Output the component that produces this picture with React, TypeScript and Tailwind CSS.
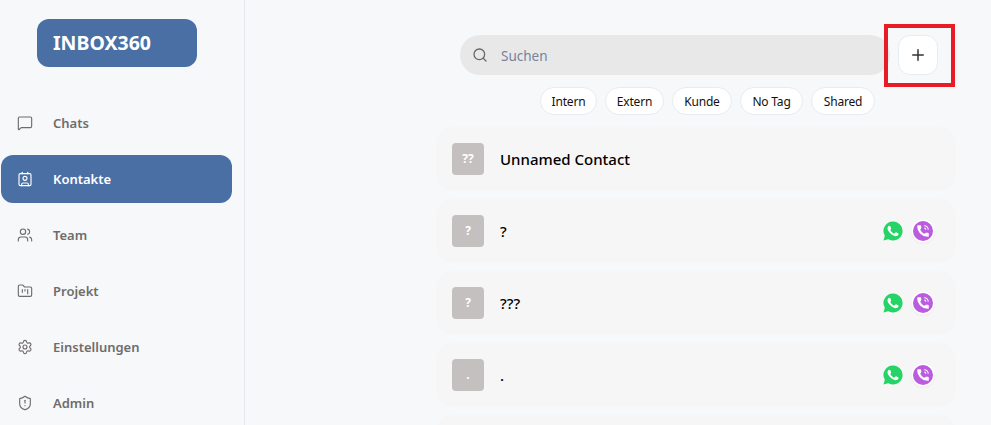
import { Contact, FolderKanban, MessageSquare, Plus, Search, Settings, ShieldAlert, Users } from "lucide-react";

const navItems = [
  { label: "Chats", icon: MessageSquare },
  { label: "Kontakte", icon: Contact, active: true },
  { label: "Team", icon: Users },
  { label: "Projekt", icon: FolderKanban },
  { label: "Einstellungen", icon: Settings },
  { label: "Admin", icon: ShieldAlert },
];

const tags = [
  { label: "Intern", width: "w-[57px]" },
  { label: "Extern", width: "w-[59px]" },
  { label: "Kunde", width: "w-[60px]" },
  { label: "No Tag", width: "w-[63px]" },
  { label: "Shared", width: "w-[64px]" },
];

const contacts = [
  { initials: "??", name: "Unnamed Contact", messengers: false },
  { initials: "?", name: "?", messengers: true },
  { initials: "?", name: "???", messengers: true },
  { initials: ".", name: ".", messengers: true },
  { initials: "", name: "", messengers: false },
];

function Messengers() {
  return (
    <div className="flex items-center gap-[9px]">
      <svg viewBox="0 0 24 24" className="h-[22px] w-[22px]">
        <path d="M12 1.6a10.4 10.4 0 0 0-8.9 15.7L1.6 22.4l5.2-1.4A10.4 10.4 0 1 0 12 1.6z" fill="#25d366" />
        <path
          d="M17.472 14.382c-.297-.149-1.758-.867-2.03-.967-.273-.099-.471-.148-.67.15-.197.297-.767.966-.94 1.164-.173.199-.347.223-.644.075-.297-.15-1.255-.463-2.39-1.475-.883-.788-1.48-1.761-1.653-2.059-.173-.297-.018-.458.13-.606.134-.133.298-.347.446-.52.149-.174.198-.298.298-.497.099-.198.05-.371-.025-.52-.075-.149-.669-1.612-.916-2.207-.242-.579-.487-.5-.669-.51-.173-.008-.371-.01-.57-.01-.198 0-.52.074-.792.372-.272.297-1.04 1.016-1.04 2.479 0 1.462 1.065 2.875 1.213 3.074.149.198 2.096 3.2 5.077 4.487.709.306 1.262.489 1.694.625.712.227 1.36.195 1.871.118.571-.085 1.758-.719 2.006-1.413.248-.694.248-1.289.173-1.413-.074-.124-.272-.198-.57-.347"
          fill="#ffffff"
        />
      </svg>
      <div className="flex h-[20px] w-[20px] items-center justify-center rounded-full bg-[#bb5ce0] shadow-[0_0_0_1.5px_#ffffff,0_1px_2px_1px_#dedede]">
        <svg viewBox="0 0 24 24" className="h-[14px] w-[14px]">
          <path
            d="M13.832 16.568a1 1 0 0 0 1.213-.303l.355-.465A2 2 0 0 1 17 15h3a2 2 0 0 1 2 2v3a2 2 0 0 1-2 2A18 18 0 0 1 2 4a2 2 0 0 1 2-2h3a2 2 0 0 1 2 2v3a2 2 0 0 1-.8 1.6l-.468.351a1 1 0 0 0-.292 1.233 14 14 0 0 0 6.392 6.384"
            fill="#ffffff"
          />
          <path d="M14 3a7 7 0 0 1 7 7M14 7a3 3 0 0 1 3 3" fill="none" stroke="#ffffff" strokeWidth="1.8" />
        </svg>
      </div>
    </div>
  );
}

export default function App() {
  return (
    <div className="flex h-[425px] w-[991px] overflow-hidden bg-[#f7f8fa] font-['Noto_Sans','Open_Sans',sans-serif]">
      <aside className="w-[245px] shrink-0 border-r border-[#e5e8ef] pl-px">
        <div className="ml-9 mt-[19px] flex h-12 w-40 items-center rounded-xl bg-[#4a6fa5] pl-4 text-[19.5px] font-bold text-white">
          INBOX360
        </div>
        <nav className="mt-8 flex flex-col gap-2">
          {navItems.map((item) => (
            <div
              key={item.label}
              className={
                item.active
                  ? "flex h-12 w-[231px] items-center gap-5 rounded-xl bg-[#4a6fa5] pl-4 text-[13px] font-semibold text-white"
                  : "flex h-12 w-[231px] items-center gap-5 rounded-xl pl-4 text-[13px] font-semibold text-[#6f6c6a]"
              }
            >
              <item.icon size={16} strokeWidth={1.7} />
              <span className="pt-0.5">{item.label}</span>
            </div>
          ))}
        </nav>
      </aside>
      <main className="ml-[191px] w-[520px] shrink-0">
        <div className="ml-6 mt-[35px] flex gap-2">
          <div className="flex h-10 w-[430px] items-center rounded-full bg-[#e8e8e8] pl-3 text-[13.5px] text-[#76839b]">
            <Search size={16} strokeWidth={1.9} className="text-[#666666]" />
            <span className="ml-[13px] pt-0.5">Suchen</span>
          </div>
          <div className="relative flex h-10 w-10 items-center justify-center rounded-xl border border-[#e8ebf1] bg-white text-[#333333]">
            <Plus size={18} strokeWidth={2} />
            <div className="absolute -bottom-[13px] -left-[15px] -right-[18px] -top-[12px] border-4 border-[#e81c24]" />
          </div>
        </div>
        <div className="ml-[104px] mt-3 flex gap-2">
          {tags.map((tag) => (
            <div
              key={tag.label}
              className={`flex h-7 items-center justify-center rounded-full border border-[#e8ebf1] bg-white text-[12px] tracking-[-0.2px] text-[#111111] ${tag.width}`}
            >
              <span className="pt-px">{tag.label}</span>
            </div>
          ))}
        </div>
        <div className="mt-3 flex flex-col gap-2">
          {contacts.map((contact, i) => (
            <div key={i} className="flex h-16 shrink-0 items-center rounded-2xl bg-[#f6f6f7] pl-4 pr-[23px]">
              <div className="flex h-8 w-8 items-center justify-center rounded bg-[#c4c0bf] text-xs font-bold text-white">
                {contact.initials}
              </div>
              <div className="ml-4 flex-1 text-[15px] font-medium text-black">{contact.name}</div>
              {contact.messengers && <Messengers />}
            </div>
          ))}
        </div>
      </main>
    </div>
  );
}
